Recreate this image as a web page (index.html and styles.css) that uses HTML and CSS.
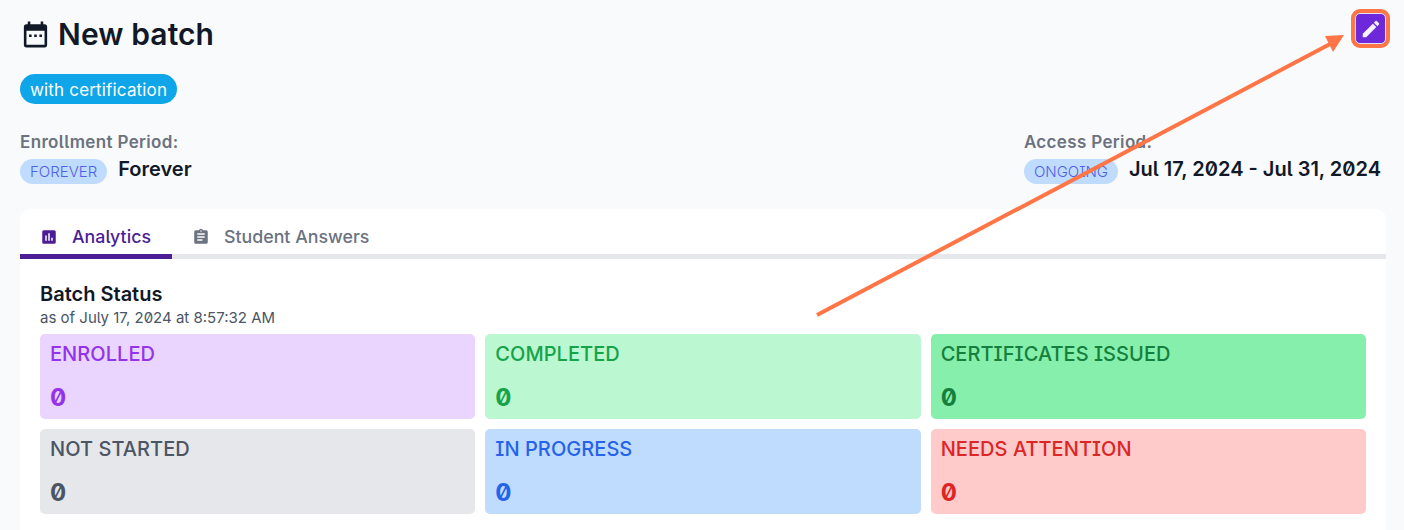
FILE: index.html
```html
<!DOCTYPE html>
<html lang="en">
<head>
    <meta charset="UTF-8">
    <meta name="viewport" content="width=device-width, initial-scale=1.0">
    <title>New batch</title>
    <link rel="stylesheet" href="styles.css">
</head>
<body>
    <div class="page">
        <header class="title-row">
            <h1>
                <svg class="title-icon" viewBox="0 0 24 24"><path d="M19 4h-1V2h-2v2H8V2H6v2H5a2 2 0 0 0-2 2v14a2 2 0 0 0 2 2h14a2 2 0 0 0 2-2V6a2 2 0 0 0-2-2zm0 16H5V9h14v11zM7 12h2v2H7zm4 0h2v2h-2zm4 0h2v2h-2z"/></svg>
                New batch
            </h1>
            <div class="edit-ring">
                <button class="edit-btn">
                    <svg viewBox="0 0 24 24"><path d="M3 17.25V21h3.75L17.81 9.94l-3.75-3.75L3 17.25zM20.71 7.04a1 1 0 0 0 0-1.41l-2.34-2.34a1 1 0 0 0-1.41 0l-1.83 1.83 3.75 3.75 1.83-1.83z"/></svg>
                </button>
            </div>
        </header>

        <span class="cert-badge">with certification</span>

        <div class="periods">
            <div>
                <div class="period-label">Enrollment Period:</div>
                <div class="period-value">
                    <span class="status-pill">FOREVER</span>
                    <span class="period-text">Forever</span>
                </div>
            </div>
            <div>
                <div class="period-label">Access Period:</div>
                <div class="period-value">
                    <span class="status-pill">ONGOING</span>
                    <span class="period-text">Jul 17, 2024 - Jul 31, 2024</span>
                </div>
            </div>
        </div>

        <section class="panel">
            <nav class="tabs">
                <div class="tab active">
                    <svg viewBox="0 0 24 24"><path d="M19 3H5a2 2 0 0 0-2 2v14a2 2 0 0 0 2 2h14a2 2 0 0 0 2-2V5a2 2 0 0 0-2-2zM9 17H7v-7h2v7zm4 0h-2V7h2v10zm4 0h-2v-4h2v4z"/></svg>
                    Analytics
                </div>
                <div class="tab">
                    <svg viewBox="0 0 24 24"><path d="M19 3h-4.18A3 3 0 0 0 12 1a3 3 0 0 0-2.82 2H5a2 2 0 0 0-2 2v14a2 2 0 0 0 2 2h14a2 2 0 0 0 2-2V5a2 2 0 0 0-2-2zm-7 0a1 1 0 1 1 0 2 1 1 0 0 1 0-2zm2 14H7v-2h7v2zm3-4H7v-2h10v2zm0-4H7V7h10v2z"/></svg>
                    Student Answers
                </div>
            </nav>

            <div class="panel-body">
                <h2>Batch Status</h2>
                <p class="as-of">as of July 17, 2024 at 8:57:32 AM</p>
                <div class="stats">
                    <div class="stat purple"><div class="stat-name">ENROLLED</div><div class="stat-num">0</div></div>
                    <div class="stat lightgreen"><div class="stat-name">COMPLETED</div><div class="stat-num">0</div></div>
                    <div class="stat green"><div class="stat-name">CERTIFICATES ISSUED</div><div class="stat-num">0</div></div>
                    <div class="stat gray"><div class="stat-name">NOT STARTED</div><div class="stat-num">0</div></div>
                    <div class="stat blue"><div class="stat-name">IN PROGRESS</div><div class="stat-num">0</div></div>
                    <div class="stat red"><div class="stat-name">NEEDS ATTENTION</div><div class="stat-num">0</div></div>
                </div>
            </div>
        </section>
    </div>

    <!-- annotation arrow on top of the page -->
    <svg class="arrow" width="1404" height="530" viewBox="0 0 1404 530">
        <line x1="817" y1="315" x2="1332" y2="43" stroke="#ff7545" stroke-width="4"/>
        <polygon points="1344,35 1325,36 1333,52" fill="#ff7545"/>
    </svg>
</body>
</html>
```

FILE: styles.css
```css
html, body {
    height: 530px;
    overflow: hidden;
}
body {
    margin: 0;
    background-color: #f9fafb;
    color: #111827;
    font-family: 'Inter', sans-serif;
    font-feature-settings: "ss02", "cv08", "zero";
}
.page {
    padding: 9px 14px 0 20px;
}
.title-row {
    display: flex;
    justify-content: space-between;
    align-items: flex-start;
    height: 50px;
}
h1 {
    display: flex;
    align-items: center;
    gap: 7px;
    height: 50px;
    margin: 0;
    font-size: 30px;
    font-weight: 600;
    letter-spacing: 0.1px;
}
.title-icon {
    width: 31px;
    height: 31px;
    fill: #111827;
}
.edit-ring {
    width: 31px;
    height: 31px;
    border: 4px solid #ff7545;
    border-radius: 9px;
    background-color: #ff7545;
}
.edit-btn {
    display: flex;
    align-items: center;
    justify-content: center;
    width: 31px;
    height: 31px;
    padding: 0;
    border: 1px solid #e5e0f5;
    border-radius: 5px;
    background-color: #6d28d9;
}
.edit-btn svg {
    width: 22px;
    height: 22px;
    fill: #f5f3ff;
}
.cert-badge {
    display: inline-block;
    margin-top: 15px;
    padding: 0 10px;
    height: 30px;
    line-height: 32px;
    border-radius: 15px;
    background-color: #0ea5e9;
    color: #fff;
    font-size: 17px;
    letter-spacing: 0.17px;
}
.periods {
    display: flex;
    justify-content: space-between;
    margin-top: 25px;
    padding-right: 9px;
}
.period-label {
    color: #6b7280;
    font-size: 17px;
    font-weight: 600;
    letter-spacing: 0.35px;
    line-height: 26px;
}
.period-value {
    display: flex;
    align-items: center;
    gap: 11px;
    height: 28px;
    margin-top: 2px;
}
.status-pill {
    padding: 0 10px;
    height: 25px;
    line-height: 25px;
    border-radius: 13px;
    background-color: #bfdbfe;
    color: #4f5fe8;
    font-size: 15px;
    font-weight: 300;
}
.period-text {
    position: relative;
    top: -2px;
    font-size: 20px;
    font-weight: 600;
}
.panel {
    margin: 24px 4px 0 0;
    height: 340px;
    border-radius: 10px;
    background-color: #fff;
}
.tabs {
    display: flex;
    height: 45px;
    border-bottom: 5px solid #e5e7eb;
}
.tab {
    display: flex;
    align-items: center;
    gap: 14px;
    height: 45px;
    padding: 10px 0 0 20px;
    box-sizing: border-box;
    color: #6b7280;
    font-size: 17.8px;
    font-weight: 500;
}
.tab svg {
    width: 18px;
    height: 18px;
    fill: #6b7280;
}
.tab.active {
    width: 152px;
    height: 50px;
    border-bottom: 5px solid #4c1d95;
    color: #4c1d95;
}
.tab.active svg {
    fill: #4c1d95;
}
.panel-body {
    padding: 21px 20px 0;
}
h2 {
    margin: 0;
    font-size: 20px;
    font-weight: 600;
    line-height: 28px;
}
.as-of {
    margin: 0;
    color: #4b5563;
    font-size: 15px;
    line-height: 20px;
}
.stats {
    display: grid;
    grid-template-columns: repeat(3, 1fr);
    gap: 10px;
    margin-top: 6px;
}
.stat {
    height: 85px;
    padding: 8px 10px;
    box-sizing: border-box;
    border-radius: 5px;
}
.stat-name {
    font-size: 20px;
    font-weight: 500;
    line-height: 24px;
    letter-spacing: 0.05px;
}
.stat-num {
    margin-top: 18px;
    font-size: 24px;
    font-weight: 700;
    line-height: 28px;
}
.purple { background-color: #e9d5ff; color: #9333ea; }
.lightgreen { background-color: #bbf7d0; color: #16a34a; }
.green { background-color: #86efac; color: #15803d; }
.gray { background-color: #e5e7eb; color: #4b5563; }
.blue { background-color: #bfdbfe; color: #2563eb; }
.red { background-color: #fecaca; color: #dc2626; }
.arrow {
    position: absolute;
    left: 0;
    top: 0;
    pointer-events: none;
}
```
